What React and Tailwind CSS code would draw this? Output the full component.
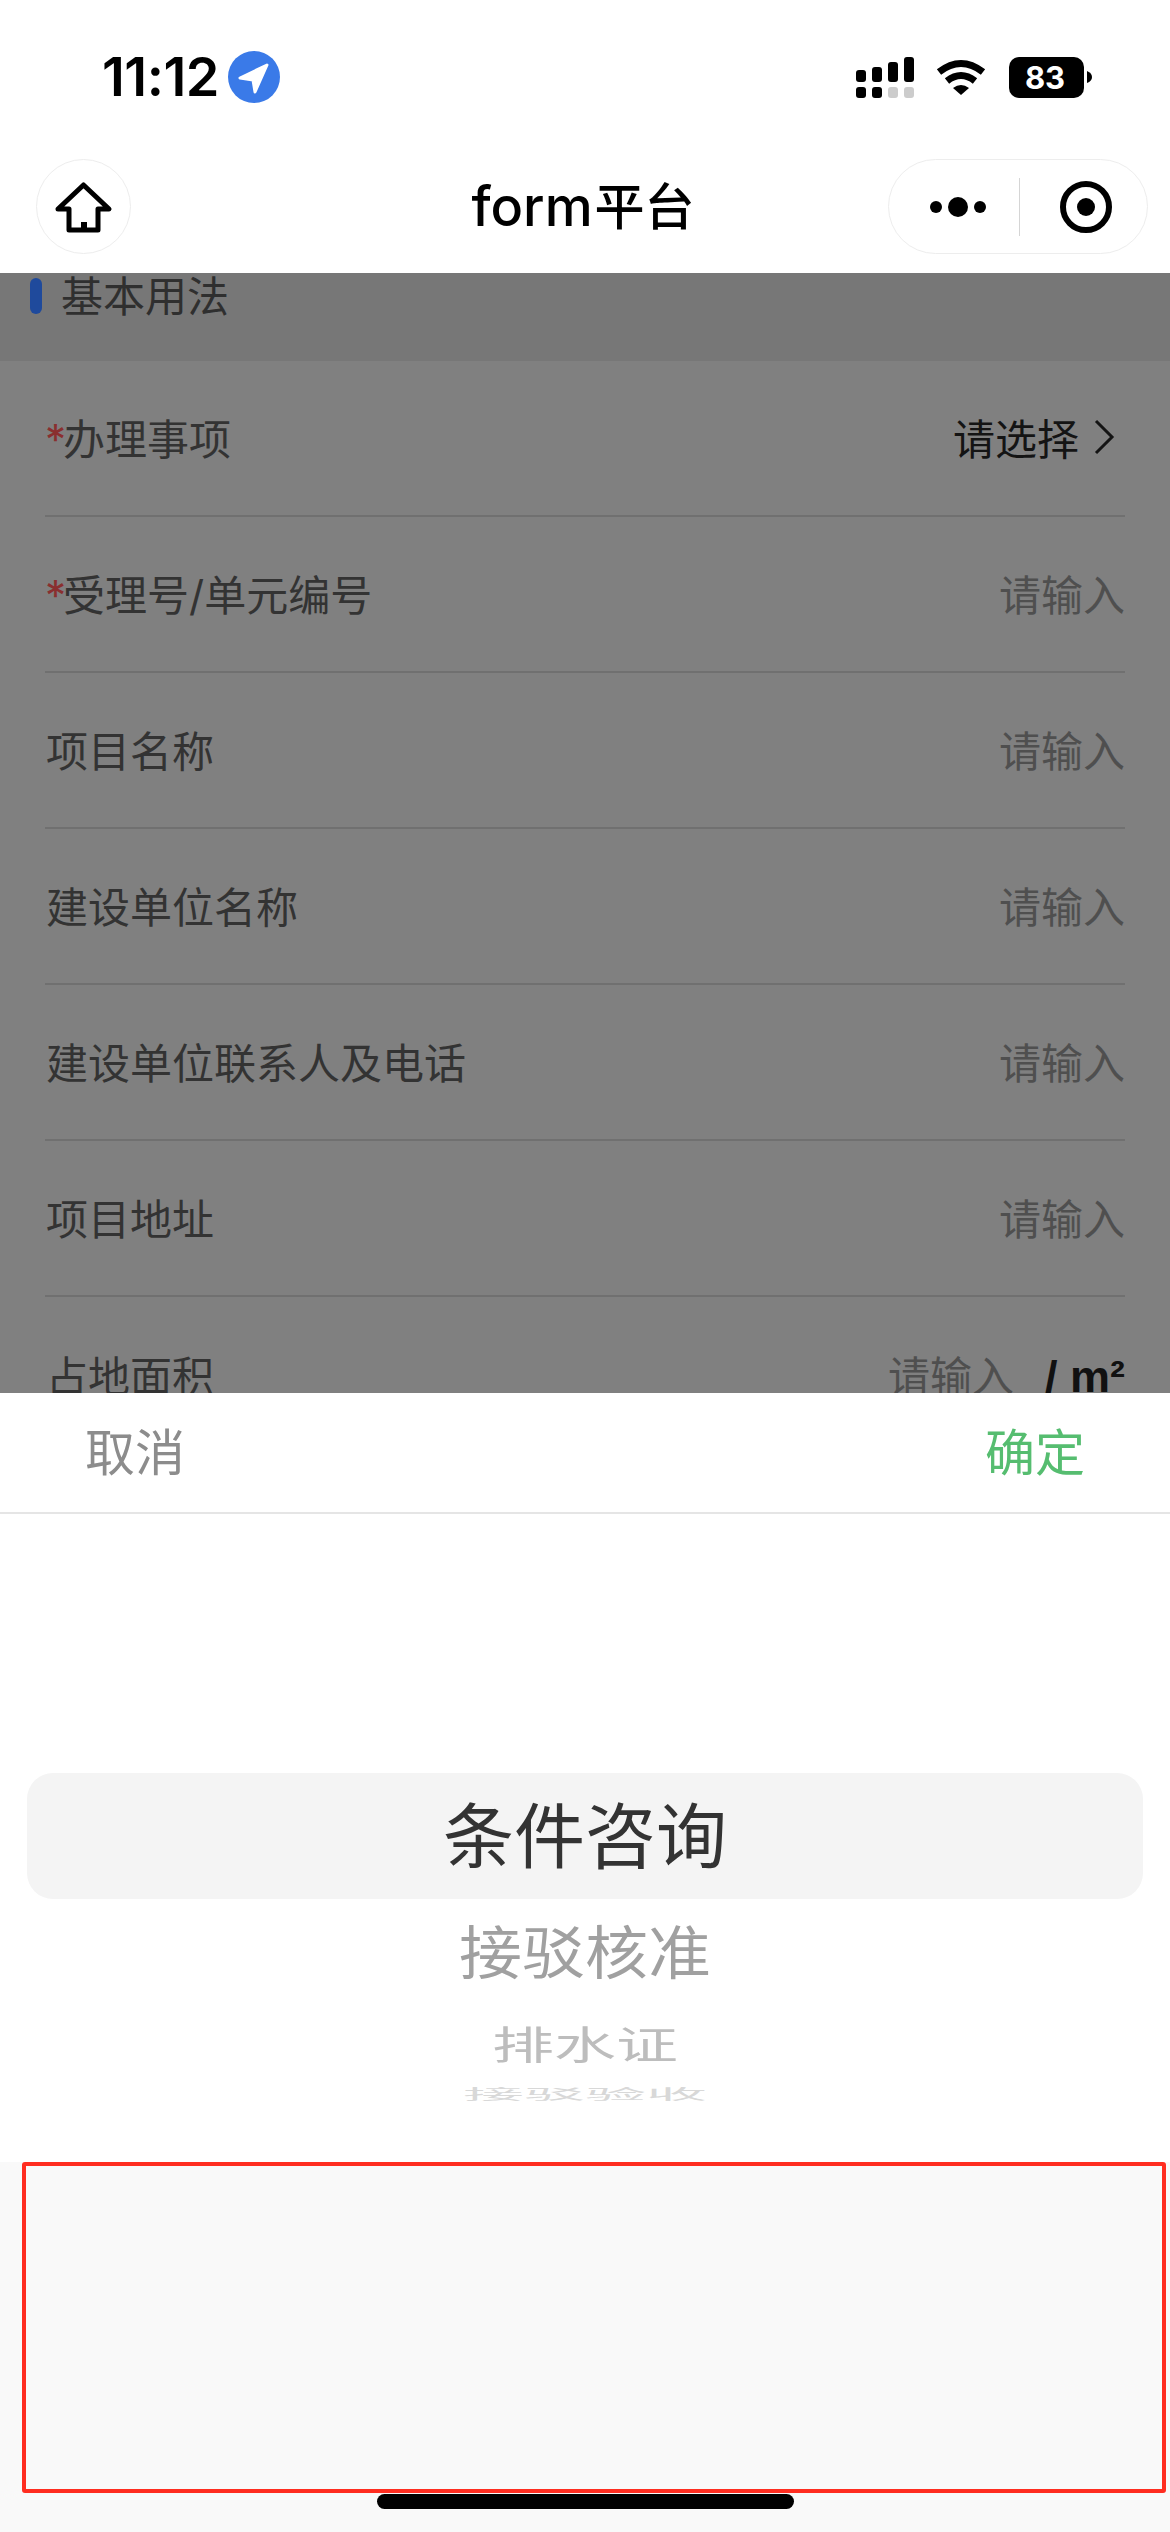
const cjk = "font-['Inter','Noto_Sans_CJK_SC',sans-serif]";

function Row({ label, req, value = '请输入', dark, unit, last }) {
  return (
    <div className={`mx-[45px] flex items-center justify-between ${last ? 'h-[156px]' : 'h-[156px] border-b-2 border-[#707070]'}`}>
      <div className="pt-[3px] text-[42px] leading-none text-[#333333] ml-px">
        {req && <span className="text-[#8a2f2f] -ml-[1px] -mr-[3px]">*</span>}
        {label}
      </div>
      <div className="flex items-center pt-[3px]">
        <span className={`text-[42px] leading-none ${dark ? 'text-[#141414]' : 'text-[#4f4f4f]'}`}>{value}</span>
        {dark && (
          <svg width="24" height="36" viewBox="0 0 24 36" className="ml-[13px] mr-[9px] -mt-[6px]">
            <path d="M4 2 L20 18 L4 34" fill="none" stroke="#141414" strokeWidth="3" />
          </svg>
        )}
        {unit && <span className="ml-[31px] font-['Liberation_Sans',sans-serif] font-bold text-[45px] leading-none text-[#111111]">/ m²</span>}
      </div>
    </div>
  );
}

export default function App() {
  return (
    <div className={`relative w-[1170px] h-[2532px] overflow-hidden bg-white flex flex-col ${cjk}`}>
      {/* status bar */}
      <div className="h-[154px] flex items-center justify-between pl-[102px] pr-[78px]">
        <div className="flex items-center">
          <span className="text-[54px] font-semibold leading-none text-black tracking-[-0.5px]">11:12</span>
          <svg width="52" height="52" viewBox="0 0 52 52" className="ml-[9px]">
            <circle cx="26" cy="26" r="26" fill="#3a7ae8" />
            <path d="M39 14 L12 27 L25 29 L27 41 Z" fill="#fff" stroke="#fff" strokeWidth="3" strokeLinejoin="round" />
          </svg>
        </div>
        <div className="flex items-center">
          <svg width="58" height="41" viewBox="0 0 58 41">
            <rect x="0" y="13" width="10" height="12" rx="3" fill="#000" />
            <rect x="16" y="10" width="10" height="15" rx="3" fill="#000" />
            <rect x="32" y="5" width="10" height="20" rx="3" fill="#000" />
            <rect x="48" y="0" width="10" height="25" rx="3" fill="#000" />
            <rect x="0" y="30" width="10" height="11" rx="3" fill="#000" />
            <rect x="16" y="30" width="10" height="11" rx="3" fill="#000" />
            <rect x="32" y="30" width="10" height="11" rx="3" fill="#cccccc" />
            <rect x="48" y="30" width="10" height="11" rx="3" fill="#cccccc" />
          </svg>
          <svg width="50" height="38" viewBox="0 0 50 38" className="ml-[22px]">
            <path d="M3 14 Q25 -3 47 14" fill="none" stroke="#000" strokeWidth="7" />
            <path d="M11 23 Q25 12 39 23" fill="none" stroke="#000" strokeWidth="7" />
            <path d="M17 30 Q25 24 33 30 L25 37 Z" fill="#000" />
          </svg>
          <div className="ml-[23px] w-[75px] h-[41px] rounded-[10px] bg-black flex items-center justify-center text-white font-bold text-[31px] leading-none pr-[3px]">83</div>
          <svg width="5" height="12" viewBox="0 0 5 12" className="ml-[3px]">
            <path d="M0 0 Q5 2 5 6 Q5 10 0 12 Z" fill="#000" />
          </svg>
        </div>
      </div>

      {/* nav bar */}
      <div className="h-[119px] pt-[5px] pl-[36px] pr-[22px] grid grid-cols-[1fr_auto_1fr] items-start">
        <div>
          <div className="w-[95px] h-[95px] rounded-full border border-[#ededed] flex items-center justify-center">
            <svg width="60" height="60" viewBox="0 0 60 60" className="mt-[1px]">
              <path d="M4 32 L29.5 8 L55 32 H44 V53 H15 V32 Z" fill="none" stroke="#000" strokeWidth="5" strokeLinejoin="round" />
              <rect x="27" y="45" width="6" height="8" fill="#000" />
            </svg>
          </div>
        </div>
        <div className="h-[95px] pr-[18px] flex items-center text-[50px] font-medium leading-none text-black">
          <span className="text-[54px] mr-[2px]">form</span>平台
        </div>
        <div className="flex justify-end">
          <div className="w-[260px] h-[95px] rounded-full border border-[#ededed] flex items-center">
            <svg width="56" height="20" viewBox="0 0 56 20" className="ml-[41px]">
              <circle cx="6" cy="10" r="6" fill="#000" />
              <circle cx="28" cy="10" r="10" fill="#000" />
              <circle cx="50" cy="10" r="6" fill="#000" />
            </svg>
            <div className="ml-[33px] w-px h-[58px] bg-[#d5d5d5]" />
            <svg width="52" height="52" viewBox="0 0 52 52" className="ml-[40px]">
              <circle cx="26" cy="26" r="23" fill="none" stroke="#000" strokeWidth="6" />
              <circle cx="26" cy="26" r="9" fill="#000" />
            </svg>
          </div>
        </div>
      </div>

      {/* dimmed page */}
      <div className="h-[1120px] overflow-hidden bg-[#808080]">
        <div className="h-[88px] bg-[#777777] pt-[5px] pl-[30px] flex items-start">
          <div className="w-[12px] h-[36px] rounded-full bg-[#1f4a9c]" />
          <div className="ml-[19px] text-[42px] leading-[42px] text-[#2f2f2f] -mt-[2px]">基本用法</div>
        </div>
        <Row req label="办理事项" value="请选择" dark />
        <Row req label="受理号/单元编号" />
        <Row label="项目名称" />
        <Row label="建设单位名称" />
        <Row label="建设单位联系人及电话" />
        <Row label="项目地址" />
        <Row label="占地面积" unit last />
      </div>

      {/* picker sheet */}
      <div className="h-[769px] bg-white flex flex-col">
        <div className="h-[121px] shrink-0 border-b-2 border-[#e5e5e5] flex items-center justify-between px-[85px] text-[50px] leading-none">
          <span className="text-[#8c8c8c]">取消</span>
          <span className="text-[#56bd70]">确定</span>
        </div>
        <div className="h-[259px] shrink-0" />
        <div className="mx-[27px] h-[126px] shrink-0 rounded-[26px] bg-[#f4f4f4] flex items-center justify-center text-[71px] leading-none text-[#333333]">条件咨询</div>
        <div className="h-[108px] shrink-0 flex items-center justify-center text-[63px] leading-none text-[#a0a0a0] scale-y-[0.92]">接驳核准</div>
        <div className="h-[76px] shrink-0 flex items-center justify-center text-[62px] leading-none text-[#bdbdbd] scale-y-[0.62]">排水证</div>
        <div className="h-[22px] shrink-0 flex items-center justify-center text-[61px] leading-none text-[#d8d8d8] scale-y-[0.22]">接驳验收</div>
      </div>

      {/* safe area */}
      <div className="flex-1 bg-[#f9f9f9] pl-[22px] pr-[4px] flex flex-col">
        <div className="h-[331px] shrink-0 rounded-[3px] border-x-[4px] border-y-[4px] border-[#ff2d20]" />
        <div className="mt-px h-[15px] w-[417px] rounded-full bg-black ml-[355px]" />
      </div>
    </div>
  );
}
